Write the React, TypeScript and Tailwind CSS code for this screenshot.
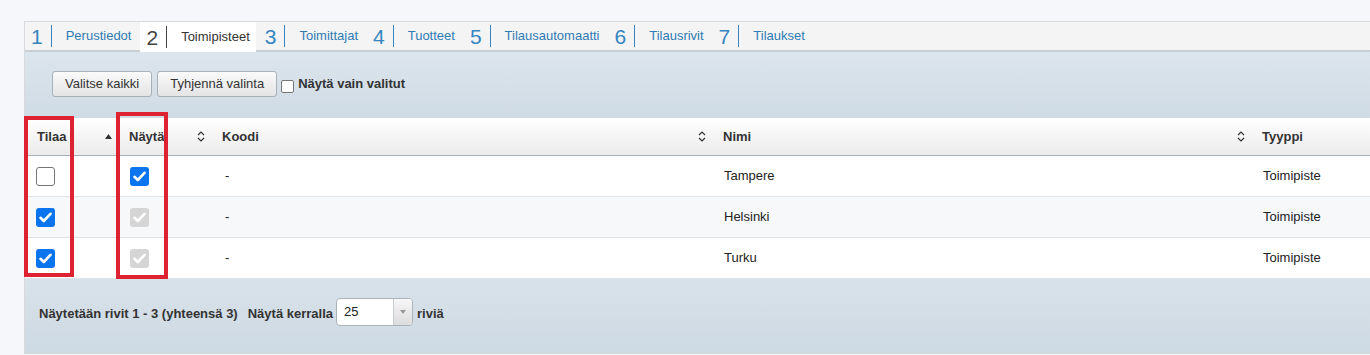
import React from "react";

const font = { fontFamily: '"Liberation Sans", Arial, sans-serif' };

const tabs = [
  { n: "1", label: "Perustiedot" },
  { n: "2", label: "Toimipisteet", active: true },
  { n: "3", label: "Toimittajat" },
  { n: "4", label: "Tuotteet" },
  { n: "5", label: "Tilausautomaatti" },
  { n: "6", label: "Tilausrivit" },
  { n: "7", label: "Tilaukset" },
];

const rows = [
  { tilaa: false, nayta: "on", koodi: "-", nimi: "Tampere", tyyppi: "Toimipiste" },
  { tilaa: true, nayta: "disabled", koodi: "-", nimi: "Helsinki", tyyppi: "Toimipiste" },
  { tilaa: true, nayta: "disabled", koodi: "-", nimi: "Turku", tyyppi: "Toimipiste" },
];

const Check = ({ state }: { state: "off" | "on" | "disabled" }) => {
  if (state === "off") {
    return <div className="w-[19px] h-[19px] rounded-[3px] border border-[#767676] bg-white" />;
  }
  return (
    <div
      className={`w-[19px] h-[19px] rounded-[3px] flex items-center justify-center ${
        state === "on" ? "bg-[#0b74ef]" : "bg-[#d5d5d5]"
      }`}
    >
      <svg width="13" height="11" viewBox="0 0 13 11">
        <path d="M1.5 5.8 L4.8 9 L11.5 1.8" fill="none" stroke="white" strokeWidth="2.6" strokeLinecap="round" strokeLinejoin="round" />
      </svg>
    </div>
  );
};

const SortBoth = () => (
  <svg width="8" height="11" viewBox="0 0 8 11">
    <path d="M1 4 L4 1 L7 4 M1 7 L4 10 L7 7" fill="none" stroke="#333" strokeWidth="1.2" />
  </svg>
);

const SortUp = () => (
  <svg width="7" height="5" viewBox="0 0 7 5">
    <path d="M0 5 L3.5 0 L7 5 Z" fill="#333" />
  </svg>
);

const HeadCell = ({ label, sort }: { label: string; sort: "up" | "both" }) => (
  <div className="flex items-center justify-between pl-[12px] pr-[5px] text-[13px] font-bold text-[#333]">
    <span>{label}</span>
    {sort === "up" ? <SortUp /> : <SortBoth />}
  </div>
);

const App = () => {
  return (
    <div className="w-[1370px] h-[355px] bg-[#f5f7fa] pt-[21px] pl-[24px] overflow-hidden" style={font}>
      <div className="w-[1360px] h-[333px] border border-r-0 border-[#d6dadf] flex flex-col bg-white">
        {/* Tabs */}
        <div className="h-[30px] bg-[#f4f4f4] border-b-2 border-[#c9ced3] flex items-stretch gap-[3px]">
          {tabs.map((t) => (
            <div
              key={t.n}
              className={`flex items-center px-[6px] ${t.active ? "bg-white h-[30px]" : ""}`}
            >
              <span className={`text-[21px] leading-none ${t.active ? "text-[#444]" : "text-[#3585c2]"}`}>{t.n}</span>
              <span className={`w-px h-[22px] ml-[8px] mr-[14px] ${t.active ? "bg-[#444]" : "bg-[#3585c2]"}`} />
              <span className={`text-[13px] ${t.active ? "text-[#333]" : "text-[#2f7bb5]"}`}>{t.label}</span>
            </div>
          ))}
        </div>

        {/* Toolbar */}
        <div className="h-[66px] bg-gradient-to-b from-[#dce5ed] to-[#cfdbe5] flex items-start pt-[19px] pl-[27px] gap-[5px]">
          <button className="h-[26px] px-[12px] rounded-[3px] border border-[#a9b1b8] bg-gradient-to-b from-[#fafafa] to-[#e4e4e4] text-[13px] text-[#333]">
            Valitse kaikki
          </button>
          <button className="h-[26px] px-[12px] rounded-[3px] border border-[#a9b1b8] bg-gradient-to-b from-[#fafafa] to-[#e4e4e4] text-[13px] text-[#333]">
            Tyhjennä valinta
          </button>
          <div className="flex items-start gap-[4px] pt-[3px] -ml-[1px]">
            <div className="mt-[6px] w-[13px] h-[13px] rounded-[2px] border border-[#767676] bg-white" />
            <span className="text-[13px] font-bold text-[#333]">Näytä vain valitut</span>
          </div>
        </div>

        {/* Table header */}
        <div className="h-[38px] grid grid-cols-[92px_93px_501px_539px_1fr] bg-gradient-to-b from-white to-[#ebebec] border-b border-[#a5b0ba]">
          <HeadCell label="Tilaa" sort="up" />
          <HeadCell label="Näytä" sort="both" />
          <HeadCell label="Koodi" sort="both" />
          <HeadCell label="Nimi" sort="both" />
          <div className="flex items-center pl-[12px] text-[13px] font-bold text-[#333]">Tyyppi</div>
        </div>

        {/* Rows */}
        {rows.map((r, i) => (
          <div
            key={r.nimi}
            className={`h-[41px] grid grid-cols-[92px_93px_501px_539px_1fr] border-b border-[#dde3e8] text-[13px] text-[#222] ${
              i === 1 ? "bg-[#f6f8fa]" : "bg-white"
            }`}
          >
            <div className="flex items-center pl-[11px]">
              <Check state={r.tilaa ? "on" : "off"} />
            </div>
            <div className="flex items-center pl-[13px]">
              <Check state={r.nayta as "on" | "disabled"} />
            </div>
            <div className="flex items-center pl-[15px]">{r.koodi}</div>
            <div className="flex items-center pl-[13px]">{r.nimi}</div>
            <div className="flex items-center pl-[13px]">{r.tyyppi}</div>
          </div>
        ))}

        {/* Footer */}
        <div className="flex-1 bg-gradient-to-b from-[#d8e2ea] to-[#cdd9e3] flex items-start pt-[19px] pl-[14px] text-[13px] font-bold text-[#333]">
          <span className="mt-[6px]">Näytetään rivit 1 - 3 (yhteensä 3)</span>
          <span className="mt-[6px] ml-[10px]">Näytä kerralla</span>
          <div className="ml-[3px] w-[77px] h-[28px] rounded-[4px] border border-[#aab3bb] bg-white flex overflow-hidden">
            <span className="flex-1 flex items-center pl-[7px] font-normal text-[13px] text-[#222]">25</span>
            <div className="w-[19px] border-l border-[#c5cbd0] bg-gradient-to-b from-[#f7f7f7] to-[#dcdcdc] flex items-center justify-center">
              <svg width="6" height="4" viewBox="0 0 6 4">
                <path d="M0 0 L6 0 L3 4 Z" fill="#999" />
              </svg>
            </div>
          </div>
          <span className="mt-[6px] ml-[4px]">riviä</span>
        </div>
      </div>

      {/* Red annotation boxes */}
      <div className="absolute left-[24px] top-[116px] w-[50px] h-[161px] border-[4px] border-[#dd2231] pointer-events-none" />
      <div className="absolute left-[116px] top-[112px] w-[52px] h-[167px] border-[4px] border-[#dd2231] pointer-events-none" />
    </div>
  );
};

export default App;
